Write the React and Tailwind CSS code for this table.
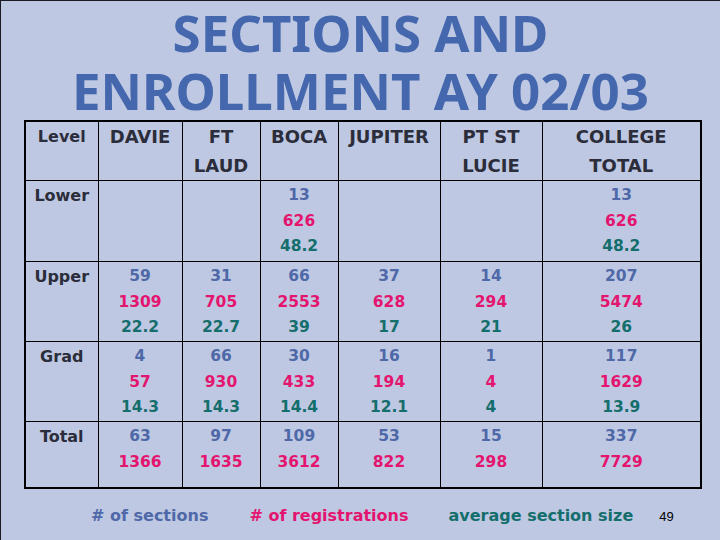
import React from "react";

const cols = ["w-[73px]", "w-[84px]", "w-[78px]", "w-[78px]", "w-[102px]", "w-[102px]", "w-[159px]"];

const headers = [["Level"], ["DAVIE"], ["FT", "LAUD"], ["BOCA"], ["JUPITER"], ["PT ST", "LUCIE"], ["COLLEGE", "TOTAL"]];

const rows = [
  { label: "Lower", h: "h-[81px]", cells: [null, null, ["13", "626", "48.2"], null, null, ["13", "626", "48.2"]] },
  {
    label: "Upper",
    h: "h-[80px]",
    cells: [
      ["59", "1309", "22.2"],
      ["31", "705", "22.7"],
      ["66", "2553", "39"],
      ["37", "628", "17"],
      ["14", "294", "21"],
      ["207", "5474", "26"],
    ],
  },
  {
    label: "Grad",
    h: "h-[80px]",
    cells: [
      ["4", "57", "14.3"],
      ["66", "930", "14.3"],
      ["30", "433", "14.4"],
      ["16", "194", "12.1"],
      ["1", "4", "4"],
      ["117", "1629", "13.9"],
    ],
  },
  {
    label: "Total",
    h: "h-[66px]",
    cells: [
      ["63", "1366"],
      ["97", "1635"],
      ["109", "3612"],
      ["53", "822"],
      ["15", "298"],
      ["337", "7729"],
    ],
  },
];

const tone = ["text-[#4f68a8]", "text-[#e3156f]", "text-[#146e6c]"];

function Stat({ values }) {
  if (!values) return null;
  return (
    <div className="flex flex-col items-center text-[15.5px] leading-[25.5px] font-bold">
      {values.map((v, i) => (
        <span key={i} className={tone[i]}>
          {v}
        </span>
      ))}
    </div>
  );
}

export default function App() {
  return (
    <div className="w-[720px] h-[540px] bg-[#bec8e3] border-t border-l border-[#1a1a22] overflow-hidden font-['DejaVu_Sans',sans-serif]">
      {/* title */}
      <h1 className="pt-[2px] text-center font-['Noto_Sans',sans-serif] font-bold text-[51px] leading-[58px] text-[#4467ad]">
        SECTIONS AND
        <br />
        ENROLLMENT AY 02/03
      </h1>

      {/* table */}
      <table className="ml-[23px] mt-[1px] table-fixed border-collapse border-2 border-black">
        <colgroup>
          {cols.map((c, i) => (
            <col key={i} className={c} />
          ))}
        </colgroup>
        <thead>
          <tr className="h-[59px]">
            {headers.map((lines, i) => (
              <th
                key={i}
                className={`border border-black align-top p-0 font-bold leading-[29px] text-[#2b2d3a] ${
                  i === 0 ? "text-[16px]" : "text-[18px]"
                }`}
              >
                {lines.map((l, j) => (
                  <div key={j}>{l}</div>
                ))}
              </th>
            ))}
          </tr>
        </thead>
        <tbody>
          {rows.map((r) => (
            <tr key={r.label} className={r.h}>
              <td className="border border-black align-top pt-[2px] px-0 text-center text-[16px] leading-[25.5px] font-bold text-[#2b2d3a]">
                {r.label}
              </td>
              {r.cells.map((c, i) => (
                <td key={i} className="border border-black align-top pt-[2px] px-0">
                  <Stat values={c} />
                </td>
              ))}
            </tr>
          ))}
        </tbody>
      </table>

      {/* legend */}
      <div className="flex items-baseline mt-[15px] pl-[90px] text-[16px] leading-[24px] font-bold">
        <span className="text-[#4f68a8]"># of sections</span>
        <span className="ml-[41px] text-[#e3156f]"># of registrations</span>
        <span className="ml-[40px] text-[#146e6c]">average section size</span>
        <span className="ml-[26px] font-['Liberation_Sans',sans-serif] font-normal text-[13px] text-black">49</span>
      </div>
    </div>
  );
}
